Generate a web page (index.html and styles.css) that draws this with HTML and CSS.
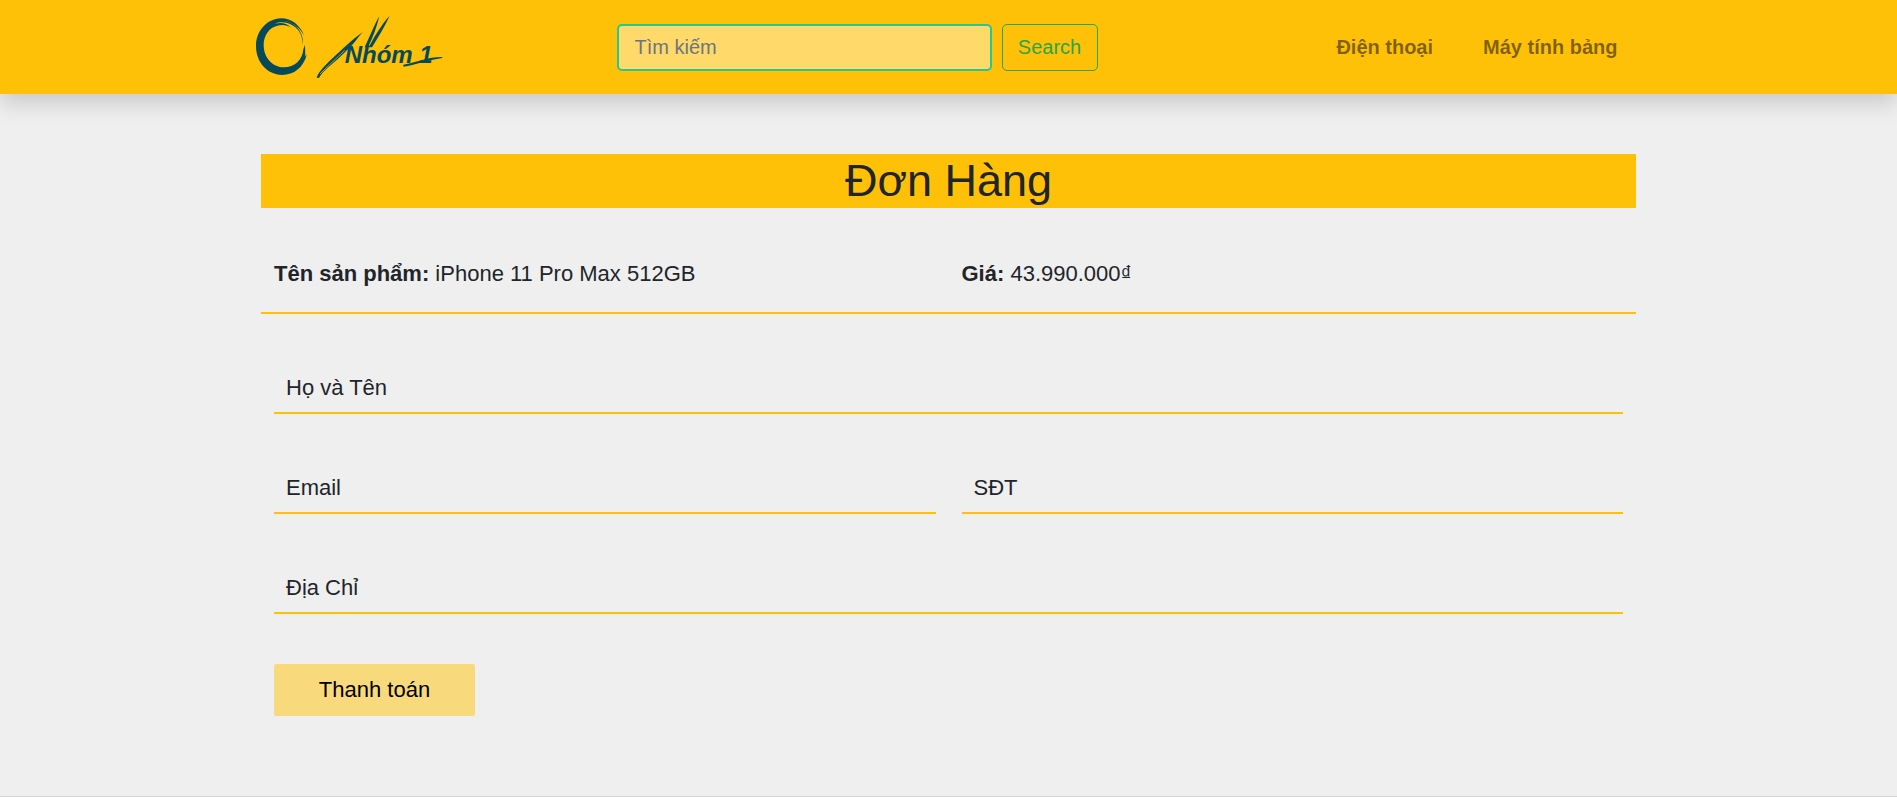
FILE: index.html
```html
<!DOCTYPE html>
<html lang="vi">
<head>
<meta charset="utf-8">
<meta name="viewport" content="width=device-width, initial-scale=1">
<title>Đơn Hàng</title>
<link rel="stylesheet" href="styles.css">
</head>
<body>
<header class="site-header">
  <div class="header-inner">
    <a class="brand" href="#">
      <svg class="logo" viewBox="45 0 564 282" role="img" aria-label="Nhóm 1">
        <path class="ink" d="M193 108C181 76 155 55 123 55C80 56 48 94 48 138C48 187 82 224 126 225C162 225 190 203 201 163L196 170L195 134L190 148C187 181 163 202 132 202C97 202 71 172 71 135C71 106 88 82 112 77C127 73 142 75 154 83C142 71 126 66 105 71C128 61 159 70 176 92C184 102 187 116 188 134C191 114 183 94 168 79C151 65 132 61 111 63C146 57 177 76 193 108Z"/>
        <path class="ink" d="M368 96C346 112 318 137 291 162C264 188 236 212 230 233L237 234C247 213 276 194 303 168C323 149 342 132 355 112Z"/>
        <path class="gap" d="M240 222C263 198 289 176 314 151"/>
        <path class="ink" d="M374 142C390 108 404 72 418 49C410 82 398 114 384 142ZM386 142C404 108 426 72 449 47C434 80 414 112 396 142Z"/>
        <path class="ink" d="M490 200C525 195 562 181 607 174L606 171C563 171 530 187 490 194Z"/>
        <text class="logo-text" x="314" y="190">Nhóm 1</text>
      </svg>
    </a>
    <form class="search">
      <input class="search-box" type="search" placeholder="Tìm kiếm" aria-label="Tìm kiếm">
      <button class="search-button" type="button">Search</button>
    </form>
    <nav class="menu">
      <a class="menu-link" href="#">Điện thoại</a>
      <a class="menu-link" href="#">Máy tính bảng</a>
    </nav>
  </div>
</header>
<main class="order">
  <h1 class="order-title">Đơn Hàng</h1>
  <div class="product">
    <div><b>Tên sản phẩm:</b> iPhone 11 Pro Max 512GB</div>
    <div><b>Giá:</b> 43.990.000₫</div>
  </div>
  <form class="order-form">
    <div class="field wide">
      <label for="name">Họ và Tên</label>
      <input id="name" type="text">
    </div>
    <div class="field">
      <label for="email">Email</label>
      <input id="email" type="text">
    </div>
    <div class="field">
      <label for="phone">SĐT</label>
      <input id="phone" type="text">
    </div>
    <div class="field wide">
      <label for="address">Địa Chỉ</label>
      <input id="address" type="text">
    </div>
    <button class="pay" type="button">Thanh toán</button>
  </form>
</main>
<footer class="site-footer"></footer>
</body>
</html>
```
FILE: styles.css
```css
* {
  box-sizing: border-box;
}

body {
  margin: 0;
  background: #efefef;
  color: #212529;
  font-family: "Liberation Sans", Arial, sans-serif;
  font-size: 22px;
  line-height: 34px;
}

input,
button {
  font: inherit;
  color: inherit;
}

.site-header {
  background: #ffc107;
  box-shadow: 0 10px 20px rgba(0, 0, 0, 0.15);
  font-size: 20px;
  line-height: 30px;
}

.header-inner {
  display: grid;
  grid-template-columns: 362fr 481px 545fr;
  align-items: center;
  max-width: 1426px;
  margin: 0 auto;
  padding: 0 19px;
}

.brand,
.logo {
  display: block;
}

.logo {
  width: 188px;
  height: 94px;
}

.ink,
.logo-text {
  fill: #064a5a;
}

.gap {
  fill: none;
  stroke: #ffc107;
  stroke-width: 2;
}

.logo-text {
  font-size: 72px;
  font-style: italic;
  font-weight: bold;
}

.search {
  display: flex;
  gap: 10px;
}

.search-box {
  flex: 1;
  min-width: 0;
  height: 47px;
  padding: 0 16px;
  border: 2px solid #20c997;
  border-radius: 5px;
  background: #ffda6b;
  appearance: none;
}

.search-box::placeholder {
  color: #6c757d;
  opacity: 1;
}

.search-button {
  width: 96px;
  padding: 0;
  border: 1px solid #28a745;
  border-radius: 5px;
  background: transparent;
  color: #28a745;
}

.menu {
  display: flex;
  justify-content: flex-end;
}

.menu-link {
  padding: 10px 25px;
  color: rgba(0, 0, 0, 0.5);
  font-weight: bold;
  text-decoration: none;
}

.order {
  max-width: 1375px;
  margin: 60px auto 80px;
}

.order-title {
  margin: 0 0 25px;
  background: #ffc107;
  font-size: 45px;
  font-weight: normal;
  line-height: 54px;
  text-align: center;
}

.product {
  display: grid;
  grid-template-columns: 1fr 1fr;
  column-gap: 26px;
  padding: 24px 13px 21px;
  border-bottom: 2px solid #ffc107;
}

.order-form {
  display: grid;
  grid-template-columns: 1fr 1fr;
  gap: 50px 26px;
  padding: 50px 13px 0;
}

.wide {
  grid-column: 1 / -1;
}

/* The label shares its input's cell and sits over it. */
.field {
  display: grid;
  align-items: center;
  height: 50px;
  border-bottom: 2px solid #ffc107;
}

.field label,
.field input {
  grid-area: 1 / 1;
}

.field label {
  z-index: 1;
  justify-self: start;
  padding-left: 12px;
}

.field input {
  width: 100%;
  height: 48px;
  padding: 0 12px;
  border: 0;
  background: transparent;
}

.pay {
  justify-self: start;
  width: 201px;
  height: 52px;
  padding: 0;
  border: 0;
  border-radius: 2px;
  background: #f8da7c;
  color: #000;
}

.site-footer {
  border-top: 1px solid #d6d6d6;
}
```
